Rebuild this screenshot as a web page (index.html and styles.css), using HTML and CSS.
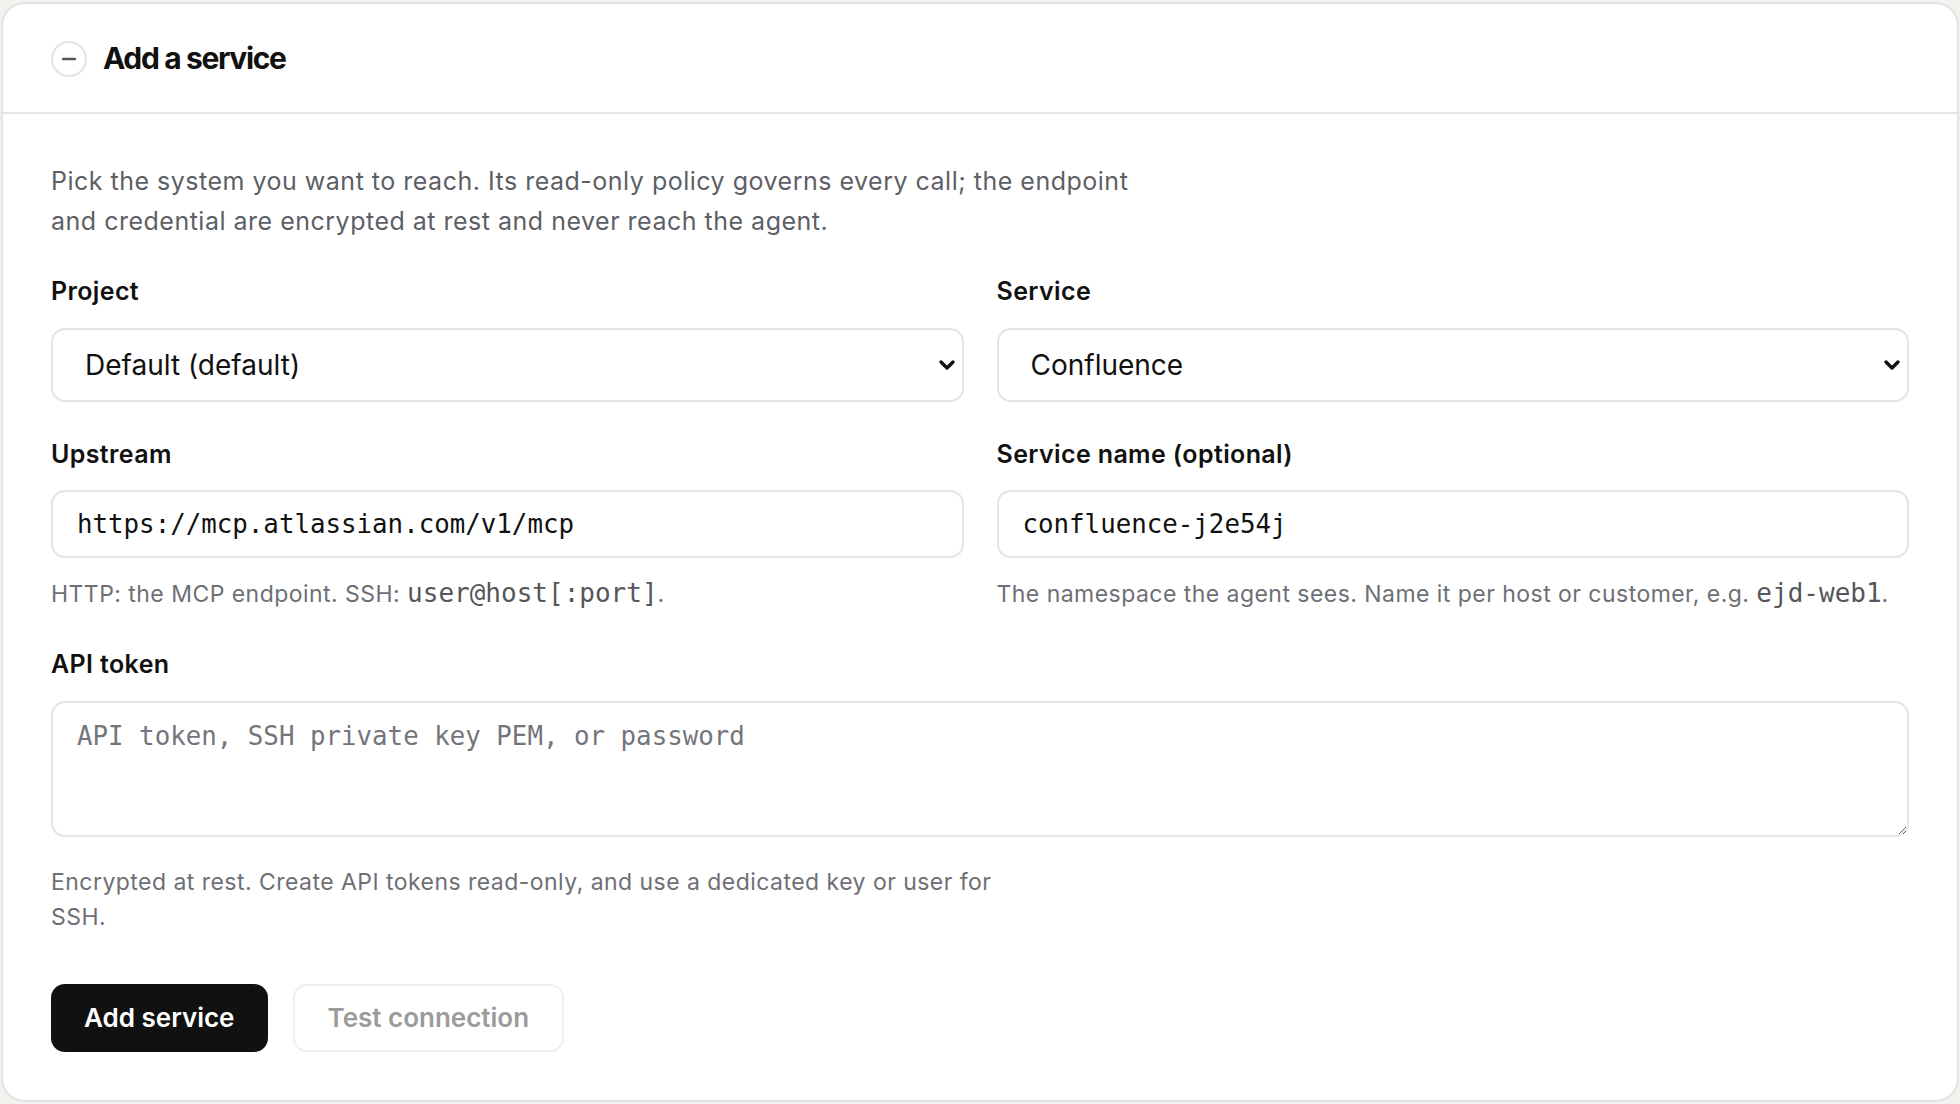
FILE: index.html
```html
<!DOCTYPE html>
<html lang="en">
<head>
    <meta charset="UTF-8">
    <meta name="viewport" content="width=device-width, initial-scale=1.0">
    <title>Add a service</title>
    <link rel="stylesheet" href="styles.css">
</head>
<body>
    <div class="card">
        <div class="card-head">
            <button class="collapse-btn" type="button" aria-label="Collapse">
                <svg width="14" height="4" viewBox="0 0 14 4"><line x1="1" y1="2" x2="13" y2="2" stroke="#55565c" stroke-width="2.4" stroke-linecap="round"/></svg>
            </button>
            <h2>Add a service</h2>
        </div>

        <div class="card-body">
            <p class="intro">Pick the system you want to reach. Its read-only policy governs every call; the endpoint and credential are encrypted at rest and never reach the agent.</p>

            <div class="grid">
                <div class="field">
                    <label for="project">Project</label>
                    <div class="select-wrap">
                        <select id="project">
                            <option>Default (default)</option>
                        </select>
                        <svg class="chevron" width="18" height="12" viewBox="0 0 18 12"><path d="M3 3 L9 9 L15 3" fill="none" stroke="#111" stroke-width="3.4" stroke-linecap="round" stroke-linejoin="round"/></svg>
                    </div>
                </div>
                <div class="field">
                    <label for="service">Service</label>
                    <div class="select-wrap">
                        <select id="service">
                            <option>Confluence</option>
                            <option>Jira</option>
                            <option>SSH</option>
                        </select>
                        <svg class="chevron" width="18" height="12" viewBox="0 0 18 12"><path d="M3 3 L9 9 L15 3" fill="none" stroke="#111" stroke-width="3.4" stroke-linecap="round" stroke-linejoin="round"/></svg>
                    </div>
                </div>

                <div class="field">
                    <label for="upstream">Upstream</label>
                    <input type="text" id="upstream" value="https://mcp.atlassian.com/v1/mcp">
                    <p class="hint">HTTP: the MCP endpoint. SSH: <code>user@host[:port]</code>.</p>
                </div>
                <div class="field">
                    <label for="svc_name">Service name (optional)</label>
                    <input type="text" id="svc_name" value="confluence-j2e54j">
                    <p class="hint">The namespace the agent sees. Name it per host or customer, e.g. <code>ejd-web1</code>.</p>
                </div>

                <div class="field wide">
                    <label for="token">API token</label>
                    <textarea id="token" placeholder="API token, SSH private key PEM, or password"></textarea>
                    <p class="hint hint-long">Encrypted at rest. Create API tokens read-only, and use a dedicated key or user for SSH.</p>
                </div>
            </div>

            <div class="actions">
                <button class="btn-primary" type="button">Add service</button>
                <button class="btn-ghost" type="button" disabled>Test connection</button>
            </div>
        </div>
    </div>
</body>
</html>
```

FILE: styles.css
```css
body {
    margin: 0;
    padding: 2px 1px;
    background-color: #f3f2ef;
    font-family: Inter, "Noto Sans", sans-serif;
    color: #111;
}
.card {
    background: #fff;
    border: 2px solid #e4e4e6;
    border-radius: 24px;
    overflow: hidden;
}
.card-head {
    display: flex;
    align-items: center;
    gap: 16px;
    height: 108px;
    padding: 0 48px;
    border-bottom: 2px solid #e6e6e8;
}
.card-head h2 {
    margin: 0;
    font-size: 30px;
    font-weight: 700;
    letter-spacing: -0.045em;
}
.collapse-btn {
    width: 36px;
    height: 36px;
    border: 2px solid #e3e3e6;
    border-radius: 50%;
    background: #fff;
    display: flex;
    align-items: center;
    justify-content: center;
    padding: 0;
    margin-top: 2px;
}
.card-body {
    padding: 47px 48px 48px;
}
.intro {
    margin: 0 0 35px;
    max-width: 1095px;
    font-size: 25px;
    line-height: 40px;
    letter-spacing: 0.02em;
    color: #5d5f66;
}
.grid {
    display: grid;
    grid-template-columns: 1fr 1fr;
    column-gap: 33px;
    row-gap: 37px;
}
.field label {
    display: block;
    font-size: 25px;
    line-height: 30px;
    font-weight: 600;
    letter-spacing: 0.015em;
    margin-bottom: 21.5px;
}
.field.wide {
    grid-column: 1 / 3;
}
.select-wrap {
    position: relative;
}
select {
    appearance: none;
    -webkit-appearance: none;
    width: 100%;
    height: 74px;
    padding: 0 60px 0 32px;
    border: 2px solid #e4e4e6;
    border-radius: 14px;
    background: #fff;
    font-family: Inter, sans-serif;
    font-size: 28px;
    color: #111;
}
.chevron {
    position: absolute;
    right: 8px;
    top: 31px;
    pointer-events: none;
}
input[type="text"] {
    box-sizing: border-box;
    width: 100%;
    height: 68px;
    padding: 0 24px;
    border: 2px solid #e4e4e6;
    border-radius: 14px;
    font-family: "DejaVu Sans Mono", monospace;
    font-size: 25.8px;
    color: #111;
}
textarea {
    box-sizing: border-box;
    display: block;
    width: 100%;
    height: 136px;
    padding: 18px 24px;
    border: 2px solid #e4e4e6;
    border-radius: 14px;
    font-family: "DejaVu Sans Mono", monospace;
    font-size: 25.8px;
    color: #111;
    resize: vertical;
}
textarea::placeholder {
    color: #74757c;
}
.hint {
    margin: 18px 0 0;
    font-size: 23px;
    line-height: 35px;
    letter-spacing: 0.02em;
    color: #6e6f76;
}
.hint code {
    font-family: "DejaVu Sans Mono", monospace;
    font-size: 26px;
    letter-spacing: 0;
    color: #55565c;
}
.hint-long {
    max-width: 970px;
    margin-top: 28px;
}
.actions {
    display: flex;
    gap: 25px;
    margin-top: 49px;
}
.actions button {
    height: 68px;
    padding: 0 33px;
    border-radius: 14px;
    font-family: Inter, sans-serif;
    font-size: 26px;
    font-weight: 600;
}
.btn-primary {
    background: #111;
    color: #fff;
    border: none;
}
.btn-ghost {
    background: #fff;
    color: #9b9b9b;
    border: 2px solid #efefef;
}
```
